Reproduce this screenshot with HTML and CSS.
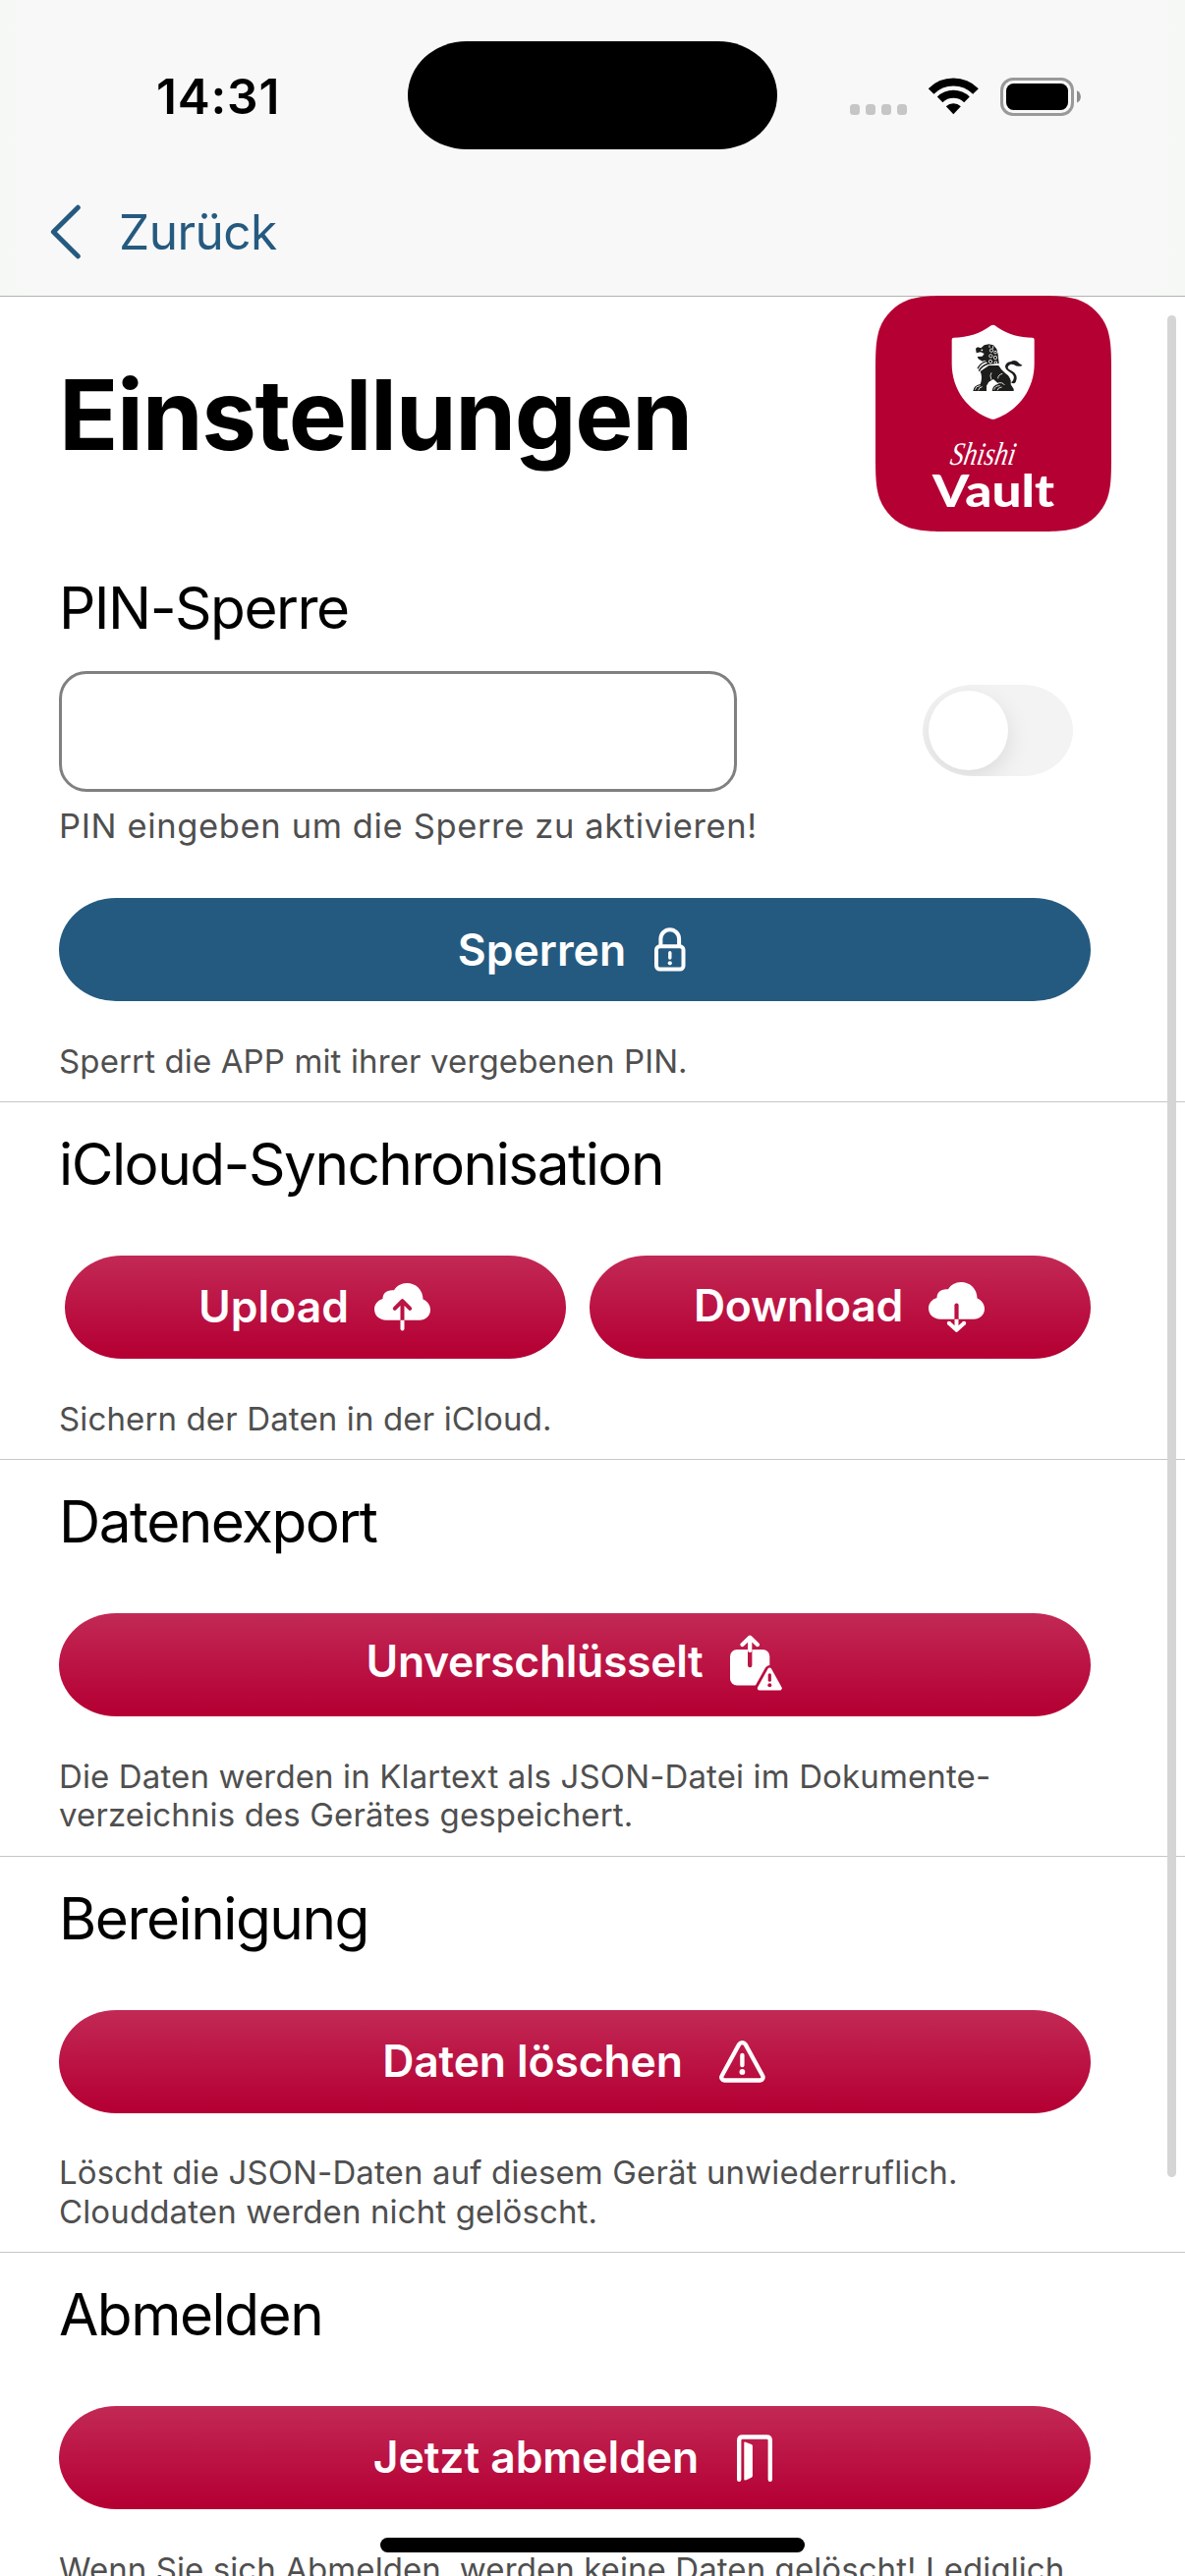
FILE: index.html
```html
<!DOCTYPE html>
<html lang="de">
<head>
<meta charset="utf-8">
<title>Einstellungen</title>
<link rel="stylesheet" href="styles.css">
</head>
<body>
<div class="screen">
  <header class="header">
    <div class="status">
      <span class="status-time">14:31</span>
      <div class="status-icons">
        <span class="signal"><i></i><i></i><i></i><i></i></span>
        <svg class="wifi" width="51" height="38" viewBox="0 0 51 38">
          <g fill="none" stroke="#000" stroke-width="8">
            <path d="M2.6 14 A32 32 0 0 1 48 14"/>
            <path d="M11.6 22.3 A19.6 19.6 0 0 1 39 22.3"/>
          </g>
          <path d="M25.3 37.3 L17.8 29.3 A11 11 0 0 1 32.8 29.3 Z"/>
        </svg>
        <svg class="battery" width="82" height="39" viewBox="0 0 82 39">
          <rect x="1.5" y="1.5" width="72" height="36" rx="11.5" fill="none" stroke="#999" stroke-width="3"/>
          <rect x="6" y="6" width="63" height="27" rx="7.5"/>
          <path d="M78 13.2 C83.2 15.5 83.2 23.5 78 25.6 Z" fill="#8c8c8c"/>
        </svg>
      </div>
    </div>
    <nav class="nav">
      <svg width="32" height="56" viewBox="0 0 32 56"><path d="M28.3 3.2 L3.4 28 L28.3 52.8" fill="none" stroke="#255a80" stroke-width="5" stroke-linecap="round" stroke-linejoin="round"/></svg>
      <a class="back">Zurück</a>
    </nav>
  </header>

  <main>
    <div class="title-row">
      <h1>Einstellungen</h1>
      <svg class="logo" width="240" height="240" viewBox="0 0 240 240">
        <path fill="#b50034" d="M82.1 0 H157.9 C181.5 0 193.4 0 206.1 4 C220 9.1 230.9 20 236 33.9 C240 46.6 240 58.5 240 82.1 V157.9 C240 181.5 240 193.4 236 206.1 C230.9 220 220 230.9 206.1 236 C193.4 240 181.5 240 157.9 240 H82.1 C58.5 240 46.6 240 33.9 236 C20 230.9 9.1 220 4 206.1 C0 193.4 0 181.5 0 157.9 V82.1 C0 58.5 0 46.6 4 33.9 C9.1 20 20 9.1 33.9 4 C46.6 0 58.5 0 82.1 0 Z"/>
        <g transform="scale(.33333) translate(-64 -33)">
          <path fill="#fff" d="M417 124 Q423 120 429 124 C460 148 500 161 543 161 Q549 161 549 167 V240 C549 320 500 385 427 410 Q423 411 419 410 C346 385 297 320 297 240 V167 Q297 161 303 161 C346 161 386 148 417 124 Z"/>
          <g fill="#1d1d1b">
            <path d="M370 194 L376 190 L386 193 L396 184 L410 181 L424 184 L434 196 L438 212 L441 240 L408 243 L400 230 L390 233 L378 226 L375 219 L390 218 L396 210 L385 205 L372 208 Z"/>
            <path d="M384 264 L410 246 L440 246 Q446 258 460 269 Q480 282 477 304 L486 318 L486 324 L420 324 Q420 307 440 302 L424 288 L410 296 L403 308 L403 324 L362 324 Q363 307 384 303 Q392 282 384 264 Z"/>
            <path d="M478 298 Q486 304 492 297 Q500 282 488 268 Q480 262 472 258 Q464 252 472 245 Q478 240 487 244 Q498 252 513 246 Q502 240 496 233 Q486 228 478 234 Q462 236 460 248 Q460 258 474 266 Q492 276 484 292 Z"/>
          </g>
          <g fill="none" stroke="#1d1d1b" stroke-width="4">
            <path d="M376 256 Q384 238 404 233"/><path d="M380 263 Q388 246 410 240"/>
          </g>
          <g fill="none" stroke="#fff" stroke-width="2.5">
            <circle cx="418" cy="200" r="5"/><circle cx="430" cy="206" r="4"/><circle cx="416" cy="217" r="5"/><circle cx="430" cy="222" r="5"/><circle cx="415" cy="234" r="5"/><circle cx="431" cy="237" r="4"/>
            <path d="M412 184 V192 M423 186 V195"/>
            <path d="M438 286 Q438 274 452 271"/><path d="M438 300 Q452 296 458 306"/>
            <path d="M368 320 Q370 308 384 308 M378 322 Q380 312 390 311"/>
            <path d="M426 320 Q428 308 444 308 M436 322 Q438 313 450 312"/>
            <path d="M418 290 Q412 276 418 268"/>
          </g>
          <circle cx="389" cy="199" r="2.6" fill="#fff"/>
        </g>
        <text class="logo-script" transform="translate(75 172) skewX(-10)" textLength="66" lengthAdjust="spacingAndGlyphs">Shishi</text>
        <text class="logo-name" x="58" y="214.500" textLength="124" lengthAdjust="spacingAndGlyphs">Vault</text>
      </svg>
    </div>

    <section class="section section-pin">
      <h2>PIN-Sperre</h2>
      <div class="pin-row">
        <input class="pin-input" type="text" aria-label="PIN">
        <div class="toggle" role="switch" aria-checked="false"><span class="knob"></span></div>
      </div>
      <p class="hint">PIN eingeben um die Sperre zu aktivieren!</p>
      <button class="btn btn-blue btn-lock">
        <span>Sperren</span>
        <svg width="32" height="45" viewBox="0 0 32 45">
          <rect x="2" y="19.300" width="27.500" height="23.200" rx="3.500" fill="none" stroke="#fff" stroke-width="4"/>
          <path d="M6.400 19 V11.700 a9.350 9.500 0 0 1 18.700 0 V19" fill="none" stroke="#fff" stroke-width="4"/>
          <path d="M15.800 25.700 V31" stroke="#fff" stroke-width="3.400" stroke-linecap="round"/>
          <circle cx="15.800" cy="36.300" r="2.100" fill="#fff"/>
        </svg>
      </button>
      <p class="caption">Sperrt die APP mit ihrer vergebenen PIN.</p>
    </section>

    <section class="section">
      <h2>iCloud-Synchronisation</h2>
      <div class="btn-pair">
        <button class="btn btn-upload">
          <span>Upload</span>
          <svg width="57" height="49" viewBox="0 0 57 49">
            <mask id="up"><rect width="57" height="49" fill="#fff"/><path d="M28.500 38 V19 M20.800 25.800 L28.500 18.200 L36.200 25.800" fill="none" stroke="#000" stroke-width="4" stroke-linecap="round" stroke-linejoin="round"/></mask>
            <path mask="url(#up)" fill="#fff" d="M12 37.700 C5 37.700 0 33 0 26.500 C0 21.500 3.500 17.500 8.500 16 C8.500 10.500 12.500 6.500 20 7.300 C22.500 3 27.500 0 33 0 C42 0 49.500 6.500 49.500 16.500 C54 18.500 57 22.500 57 27.300 C57 33.500 52 37.700 46 37.700 Z"/>
            <path d="M26.500 37.700 h4 V46.500 a2 2 0 0 1 -4 0 Z" fill="#fff"/>
          </svg>
        </button>
        <button class="btn btn-download">
          <span>Download</span>
          <svg width="57" height="51" viewBox="0 0 57 51">
            <mask id="down"><rect width="57" height="51" fill="#fff"/><path d="M28.500 40 V23.500" fill="none" stroke="#000" stroke-width="4.200" stroke-linecap="round"/></mask>
            <path mask="url(#down)" fill="#fff" d="M12 37.700 C5 37.700 0 33 0 26.500 C0 21.500 3.500 17.500 8.500 16 C8.500 10.500 12.500 6.500 20 7.300 C22.500 3 27.500 0 33 0 C42 0 49.500 6.500 49.500 16.500 C54 18.500 57 22.500 57 27.300 C57 33.500 52 37.700 46 37.700 Z"/>
            <path d="M28.500 37.700 V48 M20.800 41.800 L28.500 48.800 L36.200 41.800" fill="none" stroke="#fff" stroke-width="4" stroke-linejoin="round"/>
            <circle cx="20.800" cy="41.800" r="2" fill="#fff"/><circle cx="36.200" cy="41.800" r="2" fill="#fff"/>
          </svg>
        </button>
      </div>
      <p class="caption">Sichern der Daten in der iCloud.</p>
    </section>

    <section class="section">
      <h2>Datenexport</h2>
      <button class="btn btn-export">
        <span>Unverschlüsselt</span>
        <svg width="53" height="57" viewBox="0 0 53 57">
          <mask id="share">
            <rect width="53" height="57" fill="#fff"/>
            <path d="M20.200 15 V31" stroke="#000" stroke-width="4.400" stroke-linecap="round"/>
            <path d="M40.300 36 L50.500 54.500 H30 Z" fill="#000" stroke="#000" stroke-width="10" stroke-linejoin="round"/>
          </mask>
          <rect mask="url(#share)" y="15" width="40.300" height="36.500" rx="7" fill="#fff"/>
          <path d="M20.200 16 V4 M12.500 10 L20.200 2.600 L27.900 10" fill="none" stroke="#fff" stroke-width="4.200" stroke-linecap="round" stroke-linejoin="round"/>
          <path d="M40.300 35.600 L50.800 54.400 H29.800 Z" fill="#fff" stroke="#fff" stroke-width="4" stroke-linejoin="round"/>
          <path d="M40.300 40.800 V46.200" stroke="#ba0e41" stroke-width="3.200" stroke-linecap="round"/>
          <circle cx="40.300" cy="51.300" r="2" fill="#ba0e41"/>
        </svg>
      </button>
      <p class="caption">Die Daten werden in Klartext als JSON-Datei im Dokumente-<br>verzeichnis des Gerätes gespeichert.</p>
    </section>

    <section class="section">
      <h2>Bereinigung</h2>
      <button class="btn btn-delete">
        <span>Daten löschen</span>
        <svg width="47" height="43" viewBox="0 0 47 43">
          <path d="M20 4.100 a3.900 3.900 0 0 1 6.800 0 L44.100 35.800 a3.100 3.100 0 0 1 -2.700 4.700 H5.400 a3.100 3.100 0 0 1 -2.700 -4.700 Z" fill="none" stroke="#fff" stroke-width="4.300"/>
          <path d="M23.400 15 V25" stroke="#fff" stroke-width="4.400" stroke-linecap="round"/>
          <circle cx="23.400" cy="31.900" r="2.900" fill="#fff"/>
        </svg>
      </button>
      <p class="caption">Löscht die JSON-Daten auf diesem Gerät unwiederruflich.<br>Clouddaten werden nicht gelöscht.</p>
    </section>

    <section class="section">
      <h2>Abmelden</h2>
      <button class="btn btn-logout">
        <span>Jetzt abmelden</span>
        <svg width="36" height="48" viewBox="0 0 36 48">
          <path d="M2.200 45.700 V6 Q2.200 2.500 5.700 2.500 H30.300 Q33.800 2.500 33.800 6 V45.700" fill="none" stroke="#fff" stroke-width="4.400" stroke-linecap="round"/>
          <path d="M7.300 8.600 Q7.300 7 8.800 7.700 L14.800 10 Q15.900 10.500 15.900 11.600 V42 Q15.900 43.300 14.800 43.800 L8.800 46.400 Q7.300 47 7.300 45.400 Z" fill="#fff"/>
        </svg>
      </button>
      <p class="caption caption-last">Wenn Sie sich Abmelden, werden keine Daten gelöscht! Lediglich</p>
    </section>
  </main>

  <div class="island"></div>
  <div class="scrollbar"></div>
  <div class="home-indicator"></div>
</div>
</body>
</html>
```
FILE: styles.css
```css
* { box-sizing: border-box; }
body {
  margin: 0;
  background: #fff;
  color: #000;
  font-family: Inter, "Liberation Sans", sans-serif;
}
.screen {
  position: relative;
  width: 1206px;
  height: 2622px;
  overflow: hidden;
  background: #fff;
}

/* Header */
.header {
  height: 302px;
  padding-top: 68px;
  background: linear-gradient(90deg, #f6f8f6, #f8f8f8 10%, #f8f8f8 90%, #f6f8f6);
  border-bottom: 1px solid #b1b2b1;
}
.status {
  display: flex;
  justify-content: space-between;
  align-items: center;
  height: 60px;
  padding: 0 106px 0 159px;
}
.status-time { font-size: 49.5px; font-weight: 600; letter-spacing: 0.8px; }
.status-icons { display: flex; align-items: flex-end; gap: 22px; height: 39px; }
.status-icons svg { display: block; }
.wifi { margin-bottom: 1px; }
.signal { display: flex; gap: 6px; margin-bottom: 1px; }
.signal i { width: 10px; height: 11px; border-radius: 3.5px; background: #c6c6c6; }
.nav {
  display: flex;
  align-items: center;
  height: 173px;
  padding: 43px 0 0 51px;
}
.back {
  margin-left: 38px;
  color: #255a80;
  font-size: 49.5px;
  letter-spacing: -0.5px;
}

/* Title */
.title-row {
  display: flex;
  justify-content: space-between;
  align-items: center;
  height: 239px;
  padding: 0 75px 0 60px;
}
h1 { margin: 0; font-size: 99.5px; font-weight: 700; line-height: 108px; letter-spacing: -1.38px; }
.logo { position: relative; display: block; margin-top: -2px; }
.logo-script { font: italic 33px "Liberation Serif", serif; fill: #fff; }
.logo-name { font: 900 45.5px Lato, sans-serif; fill: #fff; }

/* Sections */
.section {
  padding: 33px 96px 21px 60px;
  border-bottom: 1px solid #c6c6c8;
}
.section-pin { padding-top: 48px; }
h2 {
  margin: 0 0 64px;
  font-size: 58.5px;
  font-weight: 400;
  line-height: 59px;
  letter-spacing: -1.5px;
}
.section-pin h2 { margin-bottom: 34px; }
.pin-row { display: flex; justify-content: space-between; align-items: flex-start; padding-right: 18px; }
.pin-input {
  width: 690px;
  height: 123px;
  margin: 1px 0;
  padding: 0 24px;
  border: 3px solid #808080;
  border-radius: 28px;
  background: #fff;
  font: 49px Inter, sans-serif;
}
.toggle {
  width: 153px;
  height: 93px;
  margin-top: 15px;
  padding: 6px;
  border-radius: 51px / 46.5px;
  background: #f3f3f3;
  overflow: hidden;
}
.knob {
  display: block;
  width: 81px;
  height: 81px;
  border-radius: 50%;
  background: #fff;
  box-shadow: 0 8px 24px rgba(0, 0, 0, .1);
}
.hint {
  margin: 14px 0 53.5px;
  color: #4f4f4f;
  font-size: 34.5px;
  line-height: 39.5px;
  letter-spacing: 0.63px;
}
.caption {
  margin: 41.5px 0 0;
  color: #4f4f4f;
  font-size: 33px;
  line-height: 39.5px;
  letter-spacing: 0.13px;
  white-space: nowrap;
}
.caption-last { letter-spacing: 0.08px; }

/* Buttons */
.btn {
  display: flex;
  justify-content: center;
  align-items: center;
  width: 100%;
  height: 105px;
  margin: 0;
  padding: 0;
  border: 0;
  border-radius: 58px / 52.5px;
  background: linear-gradient(#c22955, #b50034 95%);
  color: #fff;
  font: 600 44.5px/54px Inter, sans-serif;
}
.btn svg { display: block; flex: none; }
.btn-pair { display: grid; grid-template-columns: 1fr 1fr; gap: 24px; padding-left: 6px; }
.btn-blue { background: #255a80; }
.btn-lock { gap: 29px; padding-right: 6px; }
.btn-upload { gap: 26px; padding-right: 2px; }
.btn-upload span { margin-top: -1px; }
.btn-download { gap: 26px; padding-right: 2px; letter-spacing: -0.35px; }
.btn-download span { margin-top: -3px; }
.btn-export { gap: 28px; padding: 0 1px 4px 0; letter-spacing: -0.35px; }
.btn-export span { margin-top: -3px; }
.btn-delete { gap: 37px; padding-right: 2px; letter-spacing: -0.15px; }
.btn-logout { gap: 39px; padding-right: 4px; letter-spacing: -0.08px; }
.btn-logout span { margin-top: -1px; }

/* Overlays */
.island {
  position: absolute;
  top: 42px;
  left: 415px;
  width: 376px;
  height: 110px;
  border-radius: 60px / 55px;
  background: #000;
}
.scrollbar {
  position: absolute;
  top: 321px;
  right: 9px;
  width: 9px;
  height: 1895px;
  border-radius: 5px;
  background: #d5d5d5;
}
.home-indicator {
  position: absolute;
  top: 2583px;
  left: 387px;
  width: 432px;
  height: 15px;
  border-radius: 8px;
  background: #000;
}
```
